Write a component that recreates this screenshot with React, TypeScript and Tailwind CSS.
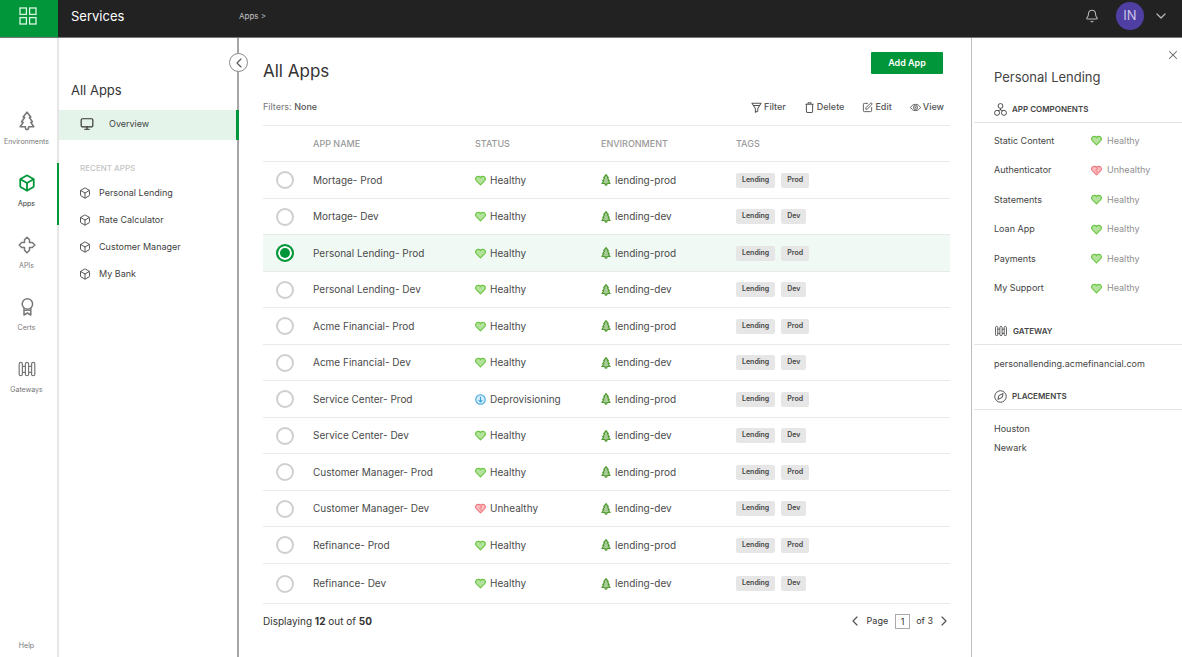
import { useState } from "react";
import type { ReactNode } from "react";
import { Bell, Box, ChevronDown, ChevronLeft, ChevronRight, Monitor, SquarePen, X } from "lucide-react";

type Status = "Healthy" | "Unhealthy" | "Deprovisioning";

interface AppRow {
  name: string;
  status: Status;
  env: string;
  tag: string;
}

interface IconProps {
  className?: string;
}

const apps: AppRow[] = [
  { name: "Mortage- Prod", status: "Healthy", env: "lending-prod", tag: "Prod" },
  { name: "Mortage- Dev", status: "Healthy", env: "lending-dev", tag: "Dev" },
  { name: "Personal Lending- Prod", status: "Healthy", env: "lending-prod", tag: "Prod" },
  { name: "Personal Lending- Dev", status: "Healthy", env: "lending-dev", tag: "Dev" },
  { name: "Acme Financial- Prod", status: "Healthy", env: "lending-prod", tag: "Prod" },
  { name: "Acme Financial- Dev", status: "Healthy", env: "lending-dev", tag: "Dev" },
  { name: "Service Center- Prod", status: "Deprovisioning", env: "lending-prod", tag: "Prod" },
  { name: "Service Center- Dev", status: "Healthy", env: "lending-dev", tag: "Dev" },
  { name: "Customer Manager- Prod", status: "Healthy", env: "lending-prod", tag: "Prod" },
  { name: "Customer Manager- Dev", status: "Unhealthy", env: "lending-dev", tag: "Dev" },
  { name: "Refinance- Prod", status: "Healthy", env: "lending-prod", tag: "Prod" },
  { name: "Refinance- Dev", status: "Healthy", env: "lending-dev", tag: "Dev" },
];

const components: { name: string; status: Status }[] = [
  { name: "Static Content", status: "Healthy" },
  { name: "Authenticator", status: "Unhealthy" },
  { name: "Statements", status: "Healthy" },
  { name: "Loan App", status: "Healthy" },
  { name: "Payments", status: "Healthy" },
  { name: "My Support", status: "Healthy" },
];

const recentApps = ["Personal Lending", "Rate Calculator", "Customer Manager", "My Bank"];

const TREE =
  "M8 1.2 L4.2 6 L5.6 6.6 L2.6 10.8 L4.2 11.4 L1.2 15.8 H6.4 V17 Q6.4 18.6 8 18.6 Q9.6 18.6 9.6 17 V15.8 H14.8 L11.8 11.4 L13.4 10.8 L10.4 6.6 L11.8 6 Z";
const HEART =
  "M6 10.2 L1.4 5.6 C.2 4.2 .6 2.2 1.9 1.4 C3.3 .5 5.1 .9 6 2.4 C6.9 .9 8.7 .5 10.1 1.4 C11.4 2.2 11.8 4.2 10.6 5.6 Z";

function GridIcon() {
  return (
    <svg className="w-[18px] h-[18px]" viewBox="0 0 18 18" fill="none" stroke="#d9f7e2" strokeWidth="1.3">
      <rect x="1" y="1" width="6.4" height="6.4" />
      <rect x="10.6" y="1" width="6.4" height="6.4" />
      <rect x="1" y="10.6" width="6.4" height="6.4" />
      <rect x="10.6" y="10.6" width="6.4" height="6.4" />
    </svg>
  );
}

function TreeIcon({ className }: IconProps) {
  return (
    <svg className={className} viewBox="0 0 16 20" fill="none" stroke="currentColor" strokeWidth="1.6" strokeLinejoin="round">
      <path d={TREE} />
    </svg>
  );
}

function EnvTree() {
  return (
    <svg className="w-[10px] h-3 shrink-0" viewBox="0 0 16 20" fill="#a9cc98" stroke="#4f9a30" strokeWidth="2" strokeLinejoin="round">
      <path d={TREE} />
    </svg>
  );
}

function ApiIcon({ className }: IconProps) {
  return (
    <svg className={className} viewBox="0 0 20 20" fill="none" stroke="currentColor" strokeWidth="1.5" strokeLinejoin="round">
      <path d="M10 2.2 L12.5 4.7 V7.5 H15.3 L17.8 10 L15.3 12.5 H12.5 V15.3 L10 17.8 L7.5 15.3 V12.5 H4.7 L2.2 10 L4.7 7.5 H7.5 V4.7 Z" />
    </svg>
  );
}

function CertIcon({ className }: IconProps) {
  return (
    <svg className={className} viewBox="0 0 20 20" fill="none" stroke="currentColor" strokeWidth="1.5" strokeLinejoin="round">
      <circle cx="10.4" cy="7" r="5.2" />
      <path d="M7 11.2 V18 L10.4 16 L13.8 18 V11.2" />
      <path d="M7 13.4 H13.8" strokeWidth="1" />
    </svg>
  );
}

function GatewayIcon({ className }: IconProps) {
  return (
    <svg className={className} viewBox="0 0 20 20" fill="none" stroke="currentColor" strokeWidth="1.2" strokeLinejoin="round">
      <path d="M2.2 5 Q2.2 3.4 3.8 3.4 Q5.4 3.4 5.4 5 V15.4 Q5.4 16.6 3.8 16.6 Q2.2 16.6 2.2 15.4 Z" />
      <path d="M8.4 5 Q8.4 3.4 10 3.4 Q11.6 3.4 11.6 5 V15.4 Q11.6 16.6 10 16.6 Q8.4 16.6 8.4 15.4 Z" />
      <path d="M14.6 5 Q14.6 3.4 16.2 3.4 Q17.8 3.4 17.8 5 V15.4 Q17.8 16.6 16.2 16.6 Q14.6 16.6 14.6 15.4 Z" />
      <path d="M5.4 7.4 H8.4 M5.4 13.4 H8.4 M11.6 7.4 H14.6 M11.6 13.4 H14.6" />
    </svg>
  );
}

function StatusIcon({ status }: { status: Status }) {
  if (status === "Deprovisioning") {
    return (
      <svg className="w-[11px] h-[11px] shrink-0" viewBox="0 0 12 12" fill="#d3ecfa" stroke="#3ba3dc" strokeWidth="1.1">
        <circle cx="6" cy="6" r="5.2" />
        <path d="M6 3 V8.6 M4 6.6 L6 8.8 L8 6.6" fill="none" />
      </svg>
    );
  }

  if (status === "Unhealthy") {
    return (
      <svg className="w-[11px] h-[11px] shrink-0" viewBox="0 0 12 11" fill="#f9bfc2" stroke="#ee7a80" strokeWidth="1.3" strokeLinejoin="round">
        <path d={HEART} />
        <path d="M6 2.4 L7.4 4 L4.8 5.2 L7.2 6.4 L5.8 8" fill="none" strokeWidth=".9" />
      </svg>
    );
  }

  return (
    <svg className="w-[11px] h-[11px] shrink-0" viewBox="0 0 12 11" fill="#b2e29b" stroke="#6cc644" strokeWidth="1.3" strokeLinejoin="round">
      <path d={HEART} />
    </svg>
  );
}

function FilterIcon() {
  return (
    <svg className="w-[11px] h-[11px]" viewBox="0 0 12 12" fill="none" stroke="currentColor" strokeWidth="1.1" strokeLinejoin="round">
      <path d="M1 1.4 H11 L7.4 7 V9.8 L4.8 11.2 V7 Z M2.6 3.8 H9.4" />
    </svg>
  );
}

function TrashIcon() {
  return (
    <svg className="w-[11px] h-[11px]" viewBox="0 0 12 12" fill="none" stroke="currentColor" strokeWidth="1.1" strokeLinejoin="round">
      <path d="M1.6 2.4 H10.4 M4.4 2.2 V.8 H7.6 V2.2 M2.6 2.6 V10.2 Q2.6 11.4 3.8 11.4 H8.2 Q9.4 11.4 9.4 10.2 V2.6" />
    </svg>
  );
}

function ViewIcon() {
  return (
    <svg className="w-[11px] h-[11px]" viewBox="0 0 12 12" fill="none" stroke="currentColor" strokeWidth="1">
      <path d="M.6 6 C3 1.4 9 1.4 11.4 6 C9 10.6 3 10.6 .6 6 Z" />
      <circle cx="6" cy="6" r="2.2" />
      <circle cx="6" cy="6" r=".6" />
    </svg>
  );
}

function ComponentsIcon() {
  return (
    <svg className="w-[13px] h-[13px]" viewBox="0 0 14 14" fill="none" stroke="currentColor" strokeWidth="1">
      <circle cx="7" cy="3.2" r="2.6" />
      <circle cx="3.3" cy="10.6" r="2.7" />
      <circle cx="10.7" cy="10.6" r="2.7" />
      <path d="M7 5.8 V7.6 M4.6 8.4 L7 7.4 L9.4 8.4" />
    </svg>
  );
}

function CompassIcon() {
  return (
    <svg className="w-[13px] h-[13px]" viewBox="0 0 14 14" fill="none" stroke="currentColor" strokeWidth="1" strokeLinejoin="round">
      <circle cx="7" cy="7" r="6.2" />
      <path d="M9.8 3.8 L8.8 8 L4.2 10.2 L5.2 6 Z" />
    </svg>
  );
}

const railItems = [
  { label: "Environments", icon: <TreeIcon className="w-4 h-5" /> },
  { label: "Apps", icon: <Box className="w-5 h-[18px] my-px" strokeWidth={2.4} />, active: true },
  { label: "APIs", icon: <ApiIcon className="w-5 h-5" /> },
  { label: "Certs", icon: <CertIcon className="w-5 h-5" /> },
  { label: "Gateways", icon: <GatewayIcon className="w-5 h-5" /> },
];

const actions = [
  { label: "Filter", icon: <FilterIcon /> },
  { label: "Delete", icon: <TrashIcon /> },
  { label: "Edit", icon: <SquarePen className="w-[11px] h-[11px]" /> },
  { label: "View", icon: <ViewIcon /> },
];

function Header() {
  return (
    <header className="flex items-center h-[38px] bg-[#222] border-b border-[#777]">
      <button aria-label="Menu" className="flex items-center justify-center w-[58px] h-[37px] pr-[2px] pb-[6px] bg-[#009639]">
        <GridIcon />
      </button>
      <span className="w-[181px] pl-[13px] pb-[6px] text-[13px] leading-4 text-white">Services</span>
      <nav className="flex-1 pb-[6px] text-[8px] leading-4 text-[#c4c4c4]">
        <a href="#">Apps</a> &gt;
      </nav>
      <div className="flex items-center pr-[13px] pb-[6px]">
        <button aria-label="Notifications">
          <Bell className="w-[14px] h-[14px] text-[#bbb]" strokeWidth={1.8} />
        </button>
        <span className="flex items-center justify-center w-7 h-7 ml-[17px] mr-[9px] rounded-full bg-[#4f3fa3] text-[13px] text-[#c9c4e6]">
          IN
        </span>
        <button aria-label="Account menu">
          <ChevronDown className="w-4 h-4 text-[#bbb]" strokeWidth={1.8} />
        </button>
      </div>
    </header>
  );
}

function Rail() {
  return (
    <nav className="flex flex-col w-[59px] shrink-0 pt-[63px] border-r-2 border-[#e6e6e6] text-[7px] leading-3 text-[#777]">
      {railItems.map((item) => (
        <a
          key={item.label}
          href="#"
          className={
            item.active
              ? "flex flex-col items-center gap-[5px] h-[62px] pt-[10px] pr-1 -mr-[2px] border-r-2 border-[#009639] text-[#009639]"
              : "flex flex-col items-center gap-[5px] h-[62px] pt-[10px] pr-1"
          }
        >
          {item.icon}
          <span className={item.active ? "text-[#333]" : ""}>{item.label}</span>
        </a>
      ))}
      <a href="#" className="mt-auto pb-[5px] pr-1 text-center">
        Help
      </a>
    </nav>
  );
}

function Sidebar() {
  return (
    <aside className="relative w-[180px] shrink-0 pt-[44px] border-r-2 border-[#a6a6a6] text-[9px] text-[#3f3f3f]">
      <button
        aria-label="Collapse sidebar"
        className="absolute top-[15px] -right-[11px] flex items-center justify-center w-[19px] h-[19px] rounded-full border border-[#8a8a8a] bg-white"
      >
        <ChevronLeft className="w-4 h-4 text-[#555]" strokeWidth={1.6} />
      </button>
      <h2 className="pl-3 text-[13px] leading-4 text-[#333]">All Apps</h2>
      <a
        href="#"
        className="flex items-center gap-[15px] h-[30px] mt-3 -mr-[2px] pl-[21px] pb-[3px] border-r-3 border-[#009639] bg-[#e4f4ea]"
      >
        <Monitor className="w-[14px] h-[14px] text-[#333]" />
        Overview
      </a>
      <h3 className="mt-[22px] mb-[5px] pl-[21px] text-[8px] leading-3 font-medium text-[#c4c4c4]">RECENT APPS</h3>
      <ul>
        {recentApps.map((name) => (
          <li key={name}>
            <a href="#" className="flex items-center gap-2 h-[27px] pl-5">
              <Box className="w-3 h-3 text-[#444]" strokeWidth={1.8} />
              {name}
            </a>
          </li>
        ))}
      </ul>
    </aside>
  );
}

function Tag({ children }: { children: ReactNode }) {
  return (
    <span className="flex items-center h-[15px] px-[6px] rounded-xs bg-[#e6e6e6] text-[7px] font-semibold text-[#444]">
      {children}
    </span>
  );
}

function AppsTable() {
  const [selected, setSelected] = useState("Personal Lending- Prod");

  return (
    <table className="w-full table-fixed border-separate border-spacing-0 border-t border-[#e9e9e9] text-[10px] text-[#4a4a4a]">
      <thead className="text-[9px] text-left text-[#999]">
        <tr className="[&>th]:h-9 [&>th]:border-b [&>th]:border-[#e9e9e9] [&>th]:font-medium">
          <th className="w-[50px]" aria-label="Select"></th>
          <th className="w-[162px]">APP NAME</th>
          <th className="w-[126px]">STATUS</th>
          <th className="w-[135px]">ENVIRONMENT</th>
          <th>TAGS</th>
        </tr>
      </thead>
      <tbody>
        {apps.map((app) => (
          <tr
            key={app.name}
            className={
              app.name === selected
                ? "h-[37px] even:h-9 bg-[#f0f9f4] [&>td]:border-b [&>td]:border-[#e9e9e9]"
                : "h-[37px] even:h-9 last:even:h-10 [&>td]:border-b [&>td]:border-[#e9e9e9]"
            }
          >
            <td className="pl-[13px]">
              <input
                type="radio"
                name="app"
                id={app.name}
                checked={app.name === selected}
                onChange={() => setSelected(app.name)}
                className="block appearance-none w-[18px] h-[18px] rounded-full border-2 border-[#cfcfcf] bg-white checked:border-[#009639] checked:bg-[#009639] checked:shadow-[inset_0_0_0_2px_white]"
              />
            </td>
            <td>
              <label htmlFor={app.name}>{app.name}</label>
            </td>
            <td>
              <span className="flex items-center gap-1">
                <StatusIcon status={app.status} />
                {app.status}
              </span>
            </td>
            <td>
              <span className="flex items-center gap-1">
                <EnvTree />
                {app.env}
              </span>
            </td>
            <td>
              <span className="flex items-center gap-[6px]">
                <Tag>Lending</Tag>
                <Tag>{app.tag}</Tag>
              </span>
            </td>
          </tr>
        ))}
      </tbody>
    </table>
  );
}

function Pager() {
  return (
    <div className="flex items-center justify-between mt-[9px] text-[#333]">
      <p className="text-[10px]">
        Displaying <b>12</b> out of <b>50</b>
      </p>
      <div className="flex items-center text-[9px]">
        <button aria-label="Previous page">
          <ChevronLeft className="w-4 h-4 text-[#555]" strokeWidth={1.8} />
        </button>
        <label htmlFor="page" className="ml-1 mr-[7px]">
          Page
        </label>
        <input
          id="page"
          defaultValue="1"
          className="w-[15px] h-[15px] mr-[6px] border border-[#aaa] text-center text-[9px]"
        />
        of 3
        <button aria-label="Next page" className="ml-[3px] -mr-[2px]">
          <ChevronRight className="w-4 h-4 text-[#555]" strokeWidth={1.8} />
        </button>
      </div>
    </div>
  );
}

function PanelHeading({ icon, children }: { icon: ReactNode; children: ReactNode }) {
  return (
    <h3 className="flex items-center gap-[5px] h-[27px] ml-[2px] pl-5 border-b border-[#e3e3e3] text-[8px] font-semibold text-[#444]">
      {icon}
      {children}
    </h3>
  );
}

function DetailsPanel() {
  return (
    <aside className="w-[211px] shrink-0 border-l border-[#bdbdbd] text-[9px] text-[#444]">
      <div className="flex justify-end pt-[10px] pr-[2px]">
        <button aria-label="Close">
          <X className="w-[14px] h-[14px] text-[#666]" strokeWidth={1.8} />
        </button>
      </div>
      <h2 className="mt-[7px] mb-[11px] pl-[22px] text-[13px] leading-4">Personal Lending</h2>
      <PanelHeading icon={<ComponentsIcon />}>APP COMPONENTS</PanelHeading>
      <ul className="pt-[3px]">
        {components.map((item) => (
          <li key={item.name} className="flex items-center h-[30px] odd:h-[29px] pl-[22px]">
            <span className="w-[97px]">{item.name}</span>
            <StatusIcon status={item.status} />
            <span className="ml-[5px] text-[#8f8f8f]">{item.status}</span>
          </li>
        ))}
      </ul>
      <div className="mt-[15px]">
        <PanelHeading icon={<GatewayIcon className="w-[14px] h-[14px]" />}>GATEWAY</PanelHeading>
      </div>
      <p className="flex items-center h-[38px] pl-[22px]">personallending.acmefinancial.com</p>
      <PanelHeading icon={<CompassIcon />}>PLACEMENTS</PanelHeading>
      <ul className="pt-[9px] pl-[22px] leading-[19px]">
        <li>Houston</li>
        <li>Newark</li>
      </ul>
    </aside>
  );
}

function App() {
  return (
    <div className="flex flex-col min-h-screen bg-white font-['Inter',sans-serif]">
      <Header />
      <div className="flex flex-1">
        <Rail />
        <Sidebar />
        <main className="flex-1 min-w-0 pt-[14px] pl-6 pr-[21px]">
          <div className="flex items-start justify-between pr-[7px]">
            <h1 className="pt-2 text-[17px] leading-[22px] text-[#333]">All Apps</h1>
            <button className="w-[72px] h-[22px] rounded-[1px] bg-[#009639] text-[9px] font-semibold text-white">
              Add App
            </button>
          </div>
          <div className="flex items-center justify-between mt-[17px] mb-[10px] pr-[6px] h-4 text-[9px] text-[#777]">
            <p>
              Filters: <span className="font-medium text-[#555]">None</span>
            </p>
            <div className="flex gap-[18px] font-medium text-[#555]">
              {actions.map((action) => (
                <button key={action.label} className="flex items-center gap-[2px]">
                  {action.icon}
                  {action.label}
                </button>
              ))}
            </div>
          </div>
          <AppsTable />
          <Pager />
        </main>
        <DetailsPanel />
      </div>
    </div>
  );
}

export default App;
